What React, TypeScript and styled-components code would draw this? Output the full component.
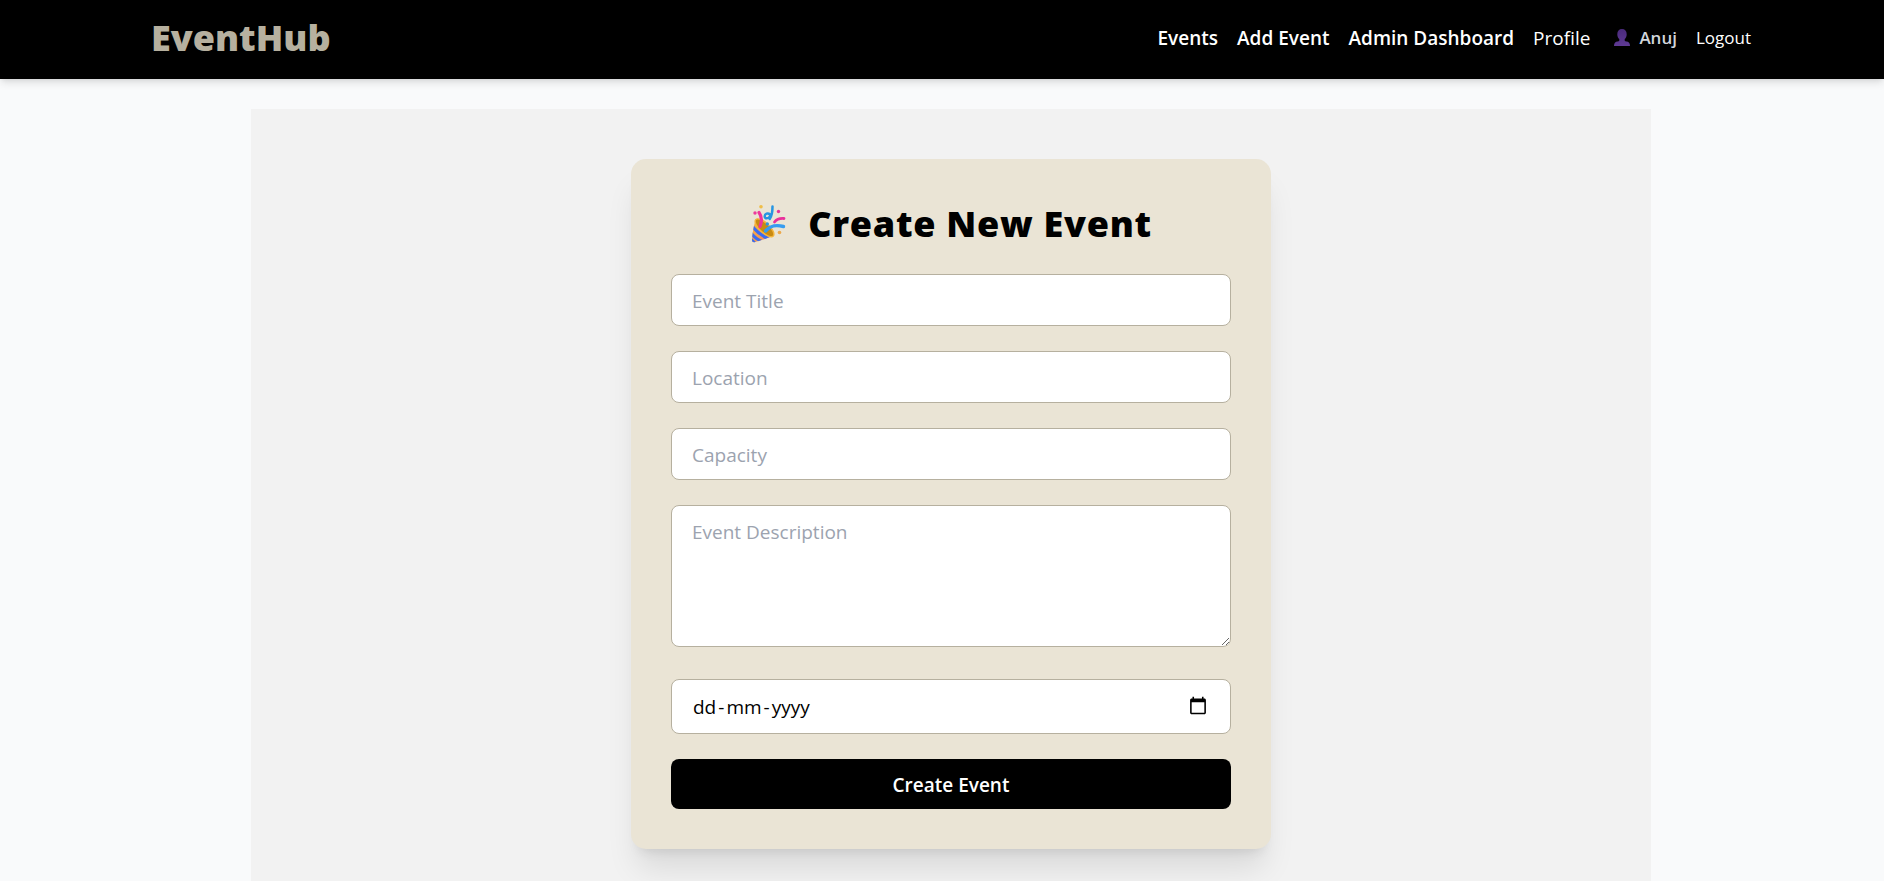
import React, { useState } from "react";
import styled, { createGlobalStyle } from "styled-components";

const GlobalStyle = createGlobalStyle`
  *, *::before, *::after { box-sizing: border-box; }
  html { overflow-x: hidden; }
  body {
    margin: 0;
    background: #f9fafb;
    color: #000;
    font-family: "Segoe UI", "Open Sans", "Noto Sans", sans-serif;
    font-size: 19px;
    line-height: 30px;
  }
  button, input, textarea { font: inherit; color: inherit; }
  h1 { margin: 0; }
`;

const Page = styled.div`
  min-height: 100vh;
  display: flex;
  flex-direction: column;
  gap: 30px;
`;

const Header = styled.header`
  background: #000;
  padding-left: 18px;
  box-shadow: 0 5px 8px -1px rgba(0, 0, 0, 0.1), 0 2px 5px -2px rgba(0, 0, 0, 0.1);
`;

const HeaderInner = styled.div`
  max-width: 1600px;
  height: 79px;
  margin: 0 auto;
  padding-bottom: 3px;
  display: flex;
  align-items: center;
  justify-content: space-between;
`;

const Logo = styled.a`
  color: #b6b09f;
  font-size: 36px;
  font-weight: 800;
  line-height: 40px;
  text-decoration: none;
`;

const Nav = styled.nav`
  display: flex;
  align-items: center;
  gap: 19px;
`;

const NavLink = styled.a<{ $strong?: boolean }>`
  color: #fff;
  font-weight: ${(p) => (p.$strong ? 600 : 400)};
  text-decoration: none;
`;

const User = styled.span`
  display: flex;
  align-items: center;
  gap: 8px;
  padding-left: 4px;
  color: #d1d5db;
  font-size: 17px;
  font-weight: 600;
`;

const LogoutButton = styled.button`
  border: 0;
  padding: 0;
  background: none;
  color: #fff;
  font-size: 17px;
  cursor: pointer;
`;

const Main = styled.main`
  flex: 1;
  display: flex;
  justify-content: center;
  padding-left: 18px;
`;

const Panel = styled.section`
  width: 100%;
  max-width: 1400px;
  padding: 50px 20px 32px;
  background: #f2f2f2;
`;

const Card = styled.form`
  max-width: 640px;
  margin: 0 auto;
  padding: 40px;
  display: flex;
  flex-direction: column;
  gap: 25px;
  background: #eae4d5;
  border-radius: 15px;
  box-shadow: 0 25px 31px -6px rgba(0, 0, 0, 0.1), 0 10px 12px -8px rgba(0, 0, 0, 0.1);
`;

const Title = styled.h1`
  display: flex;
  align-items: center;
  justify-content: center;
  gap: 20px;
  height: 50px;
  font-size: 36px;
  font-weight: 800;
  letter-spacing: 0.02em;
`;

const Field = styled.label`
  position: relative;
  display: block;
`;

const Control = styled.input`
  display: block;
  width: 100%;
  height: 52px;
  padding: 11px 20px 9px;
  border: 1px solid #b6b09f;
  border-radius: 8px;
  background: #fff;
  outline: none;
  &::placeholder { color: #9ca3af; opacity: 1; }
`;

const DateControl = styled(Control)<{ $empty: boolean }>`
  height: 55px;
  padding: 10px 20px 12px;
  &::-webkit-datetime-edit { opacity: ${(p) => (p.$empty ? 0 : 1)}; }
  &::-webkit-calendar-picker-indicator { width: 20px; height: 20px; }
`;

const DateHint = styled.span`
  position: absolute;
  left: 22px;
  top: 13px;
  display: flex;
  gap: 2px;
  pointer-events: none;
`;

const TextArea = styled(Control)`
  height: 142px;
  margin-bottom: 7px;
  resize: vertical;
`;

const Submit = styled.button`
  height: 50px;
  border: 0;
  border-radius: 8px;
  padding: 2px 20px 0;
  background: #000;
  color: #fff;
  font-weight: 600;
  cursor: pointer;
`;

const UserIcon = () => (
  <svg width="18" height="20" viewBox="0 0 18 20" aria-hidden="true">
    <defs>
      <linearGradient id="user" x1="0" y1="0" x2="0" y2="1">
        <stop offset="0" stopColor="#4a2a7c" />
        <stop offset="1" stopColor="#5f3a94" />
      </linearGradient>
    </defs>
    <path
      fill="url(#user)"
      d="M9 1C6 1 4.300 3 4.300 6.200c0 2 .7 3.800 2 4.900v1.300c-.2.700-1 .9-2.300 1.200C2 14.100 1 15.300 1 18h16c0-2.700-1-3.900-3-4.400-1.300-.3-2.100-.5-2.300-1.200v-1.300c1.300-1.100 2-2.900 2-4.900C13.700 3 12 1 9 1z"
    />
  </svg>
);

const PartyIcon = () => (
  <svg width="38" height="40" viewBox="0 0 38 40" fill="none" strokeLinecap="round" aria-hidden="true">
    <defs>
      <linearGradient id="cone" x1="3" y1="18" x2="20" y2="34" gradientUnits="userSpaceOnUse">
        <stop offset="0" stopColor="#f9b33c" />
        <stop offset="1" stopColor="#f58a5b" />
      </linearGradient>
      <clipPath id="coneClip">
        <path d="M5.500 16.500C3.500 22 2.300 31 2 36c0 1.700 1 2.500 2.600 2.200C10 37 18 34 23.500 31.500z" />
      </clipPath>
    </defs>
    <g clipPath="url(#coneClip)">
      <rect width="38" height="40" fill="url(#cone)" />
      <path d="M1 20.500c4 6 10 11 18 14.500M0 27.500c3 5 7 8 13 10.500M0 34.500l5 5" stroke="#3b6cf0" strokeWidth="3.200" />
    </g>
    <ellipse cx="14.500" cy="23.800" rx="4.800" ry="12" transform="rotate(-47 14.500 23.800)" fill="#c88a12" stroke="#f3b53c" strokeWidth="1.400" />
    <path d="M9 8.500c3 4 3.200 8.500 1 14" stroke="#f0349a" strokeWidth="3.200" />
    <path d="M22.500 2.500c0 5-1 10-2.800 12.500M20 10.500c-2.200-2.200-5.300-.7-5.300 1.700 0 3 3.700 2.600 5 .3" stroke="#2795e2" strokeWidth="2.500" />
    <path d="M24.500 18c2.500-3.300 5.500-3.800 9.500-3.500" stroke="#e9309b" strokeWidth="2.800" />
    <path d="M15.500 27c5-5.500 10-6.500 18-4.500" stroke="#369cf0" strokeWidth="3.400" />
    <circle cx="11" cy="2.800" r="1.800" fill="#efbd47" />
    <circle cx="5" cy="9" r="1.700" fill="#ed3b9c" />
    <circle cx="28.500" cy="7.500" r="1.700" fill="#e3329b" />
    <circle cx="17.300" cy="20" r="1.700" fill="#2e96dc" />
    <circle cx="29.500" cy="28.500" r="1.800" fill="#eda94b" />
  </svg>
);

export default function App() {
  const [date, setDate] = useState("");
  return (
    <>
      <GlobalStyle />
      <Page>
        <Header>
          <HeaderInner>
            <Logo href="#">EventHub</Logo>
            <Nav>
              <NavLink href="#events" $strong>Events</NavLink>
              <NavLink href="#add" $strong>Add Event</NavLink>
              <NavLink href="#admin" $strong>Admin Dashboard</NavLink>
              <NavLink href="#profile">Profile</NavLink>
              <User><UserIcon />Anuj</User>
              <LogoutButton type="button">Logout</LogoutButton>
            </Nav>
          </HeaderInner>
        </Header>
        <Main>
          <Panel>
            <Card onSubmit={(e: React.FormEvent) => e.preventDefault()}>
              <Title><PartyIcon />Create New Event</Title>
              <Field><Control type="text" aria-label="Event Title" placeholder="Event Title" /></Field>
              <Field><Control type="text" aria-label="Location" placeholder="Location" /></Field>
              <Field><Control type="number" aria-label="Capacity" placeholder="Capacity" /></Field>
              <Field><TextArea as="textarea" aria-label="Event Description" placeholder="Event Description" /></Field>
              <Field>
                <DateControl
                  type="date"
                  aria-label="Event Date"
                  value={date}
                  $empty={!date}
                  onChange={(e: React.ChangeEvent<HTMLInputElement>) => setDate(e.target.value)}
                />
                {!date && (
                  <DateHint aria-hidden="true">
                    <span>dd</span><span>-</span><span>mm</span><span>-</span><span>yyyy</span>
                  </DateHint>
                )}
              </Field>
              <Submit type="submit">Create Event</Submit>
            </Card>
          </Panel>
        </Main>
      </Page>
    </>
  );
}
